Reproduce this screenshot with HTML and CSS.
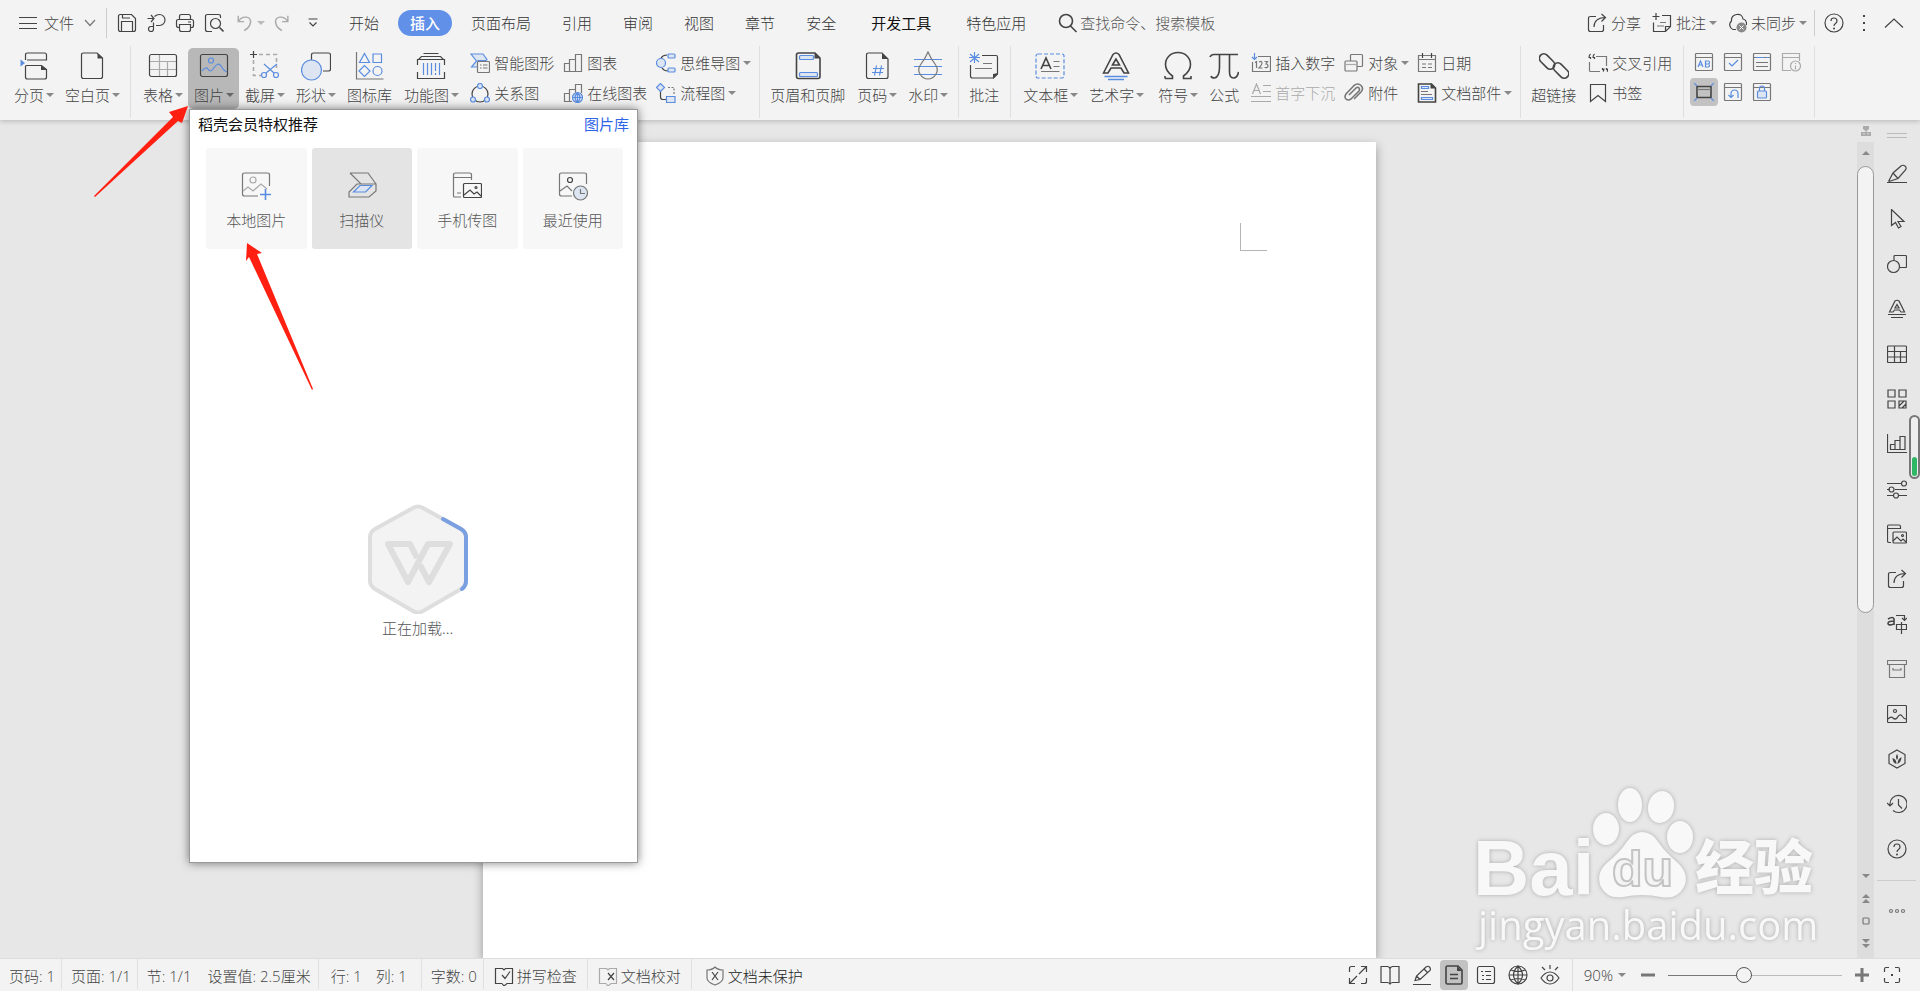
FILE: index.html
```html
<!DOCTYPE html>
<html lang="zh-CN">
<head>
<meta charset="utf-8">
<title>文字文稿</title>
<link rel="stylesheet" href="styles.css">
</head>
<body>
<svg class="sprite" aria-hidden="true">
  <!-- quick access, 20 x 20 -->
  <symbol id="menu" viewBox="0 0 20 20"><path class="k" d="M1 4.500h18M1 10.500h18M1 15.500h18"/></symbol>
  <symbol id="chev" viewBox="0 0 12 8"><path class="g" d="M1 1l5 5.500L11 1"/></symbol>
  <symbol id="save" viewBox="0 0 20 20"><path class="k" d="M1.500 3.500q0-2 2-2h11l4 4v11q0 2-2 2h-13q-2 0-2-2zM5.500 1.500v3.500h7.500M4.500 18v-9.500h11V18"/></symbol>
  <symbol id="export" viewBox="0 0 20 20"><path class="k" d="M1.500 5.500h6M5 2l3 3.500L5 9M8.500 3.500q2-2 5-2a5.500 5.500 0 0 1 0 11H10M7.500 9.500V16a2.500 2.500 0 1 1-2.500-2.500h2.500"/></symbol>
  <symbol id="print" viewBox="0 0 20 20"><path class="k" d="M4.500 6.500v-3q0-2 2-2h7q2 0 2 2v3M4.500 14.500h-1q-2 0-2-2v-4q0-2 2-2h13q2 0 2 2v4q0 2-2 2h-1M4.500 11.500h11v5q0 2-2 2h-7q-2 0-2-2zM13 9h3"/></symbol>
  <symbol id="preview" viewBox="0 0 20 20"><path class="k" d="M16.500 5V3.500q0-2-2-2h-11q-2 0-2 2v13q0 2 2 2H8"/><circle class="k" cx="11.500" cy="10.500" r="5"/><path class="k w2" d="M15.500 14.500l4 4"/></symbol>
  <symbol id="undo" viewBox="0 0 20 20"><path class="l w2" d="M2.500 2v6.500H9M3 8q3-5 8.500-4.500T16 10q-1 5-7 8.500"/></symbol>
  <symbol id="redo" viewBox="0 0 20 20"><path class="l w2" d="M16.500 2v6.500H10M16 8q-3-5-8.500-4.500T3 10q1 5 7 8.500"/></symbol>
  <symbol id="more" viewBox="0 0 10 10"><path class="k" d="M.5 1h9M1.500 4.500L5 8l3.500-3.500"/></symbol>
  <symbol id="search" viewBox="0 0 20 20"><circle class="k w2" cx="8" cy="8" r="6.500"/><path class="k w2" d="M12.500 13l6 6"/></symbol>
  <symbol id="share" viewBox="0 0 20 20"><path class="k" d="M9 3.500H3.500q-2 0-2 2v11q0 2 2 2h11q2 0 2-2V12M7 14q0-9 11-9.500M14.500 1l4 3.500-4 4"/></symbol>
  <symbol id="comment" viewBox="0 0 20 20"><path class="k" d="M4 0v7M.5 3.500h7M10 2.500h8.500v11l-5 5H1.500v-9M13.500 18v-4.500h5"/><path class="g" d="M8 9.500h6M5 13h7"/></symbol>
  <symbol id="cloud" viewBox="0 0 20 20"><path class="k" d="M9 16.500H6a5 5 0 0 1-1.500-8.500Q4 2.500 9.500 1.500T16 6q4 1 3.500 6"/><circle class="fg" cx="14.500" cy="14.500" r="5"/><path stroke="#fff" d="M12.500 12.500l4 4M16.500 12.500l-4 4"/></symbol>
  <symbol id="help" viewBox="0 0 20 20"><circle class="k" cx="10" cy="10" r="9"/><path class="k" d="M7 8q0-3 3-3t3 3q0 1.500-1.500 2.500T10 13"/><circle class="fk" cx="10" cy="15.500" r="1"/></symbol>
  <symbol id="dots" viewBox="0 0 4 20"><path class="fk" d="M1 2h2v2H1zM1 9h2v2H1zM1 16h2v2H1z"/></symbol>
  <symbol id="up" viewBox="0 0 20 12"><path class="k" d="M1 10.500l9-8.500 9 8.500"/></symbol>

  <!-- large ribbon icons, 30 x 30 -->
  <symbol id="i-break" viewBox="0 0 30 30"><path class="k" d="M6.500 9V4q0-2 2-2h17q2 0 2 2v5H8M6.500 27V15.500q0-1 1-1h15l5 4V26q0 2-2 2h-17q-2 0-2-2"/><path class="fk" d="M22 14l6 5h-6z"/><path class="fb" d="M1.500 8.500l4.500 3.500-4.500 3.500z"/></symbol>
  <symbol id="i-blank" viewBox="0 0 30 30"><path class="k" d="M4.500 4q0-2 2-2H20l5.500 5v18.500q0 2-2 2h-17q-2 0-2-2z"/><path class="fk" d="M20.500 2l5.500 5.500h-5.500z"/></symbol>
  <symbol id="i-table" viewBox="0 0 30 30"><path class="l" d="M2 10.500h26M2 18.500h26M11.500 3v23M19.500 10v16"/><rect class="k" x="1.500" y="3.500" width="27" height="22" rx="2"/></symbol>
  <symbol id="i-pic" viewBox="0 0 30 30"><rect class="k" x="1.500" y="3.500" width="27" height="22" rx="2"/><circle class="b" cx="12" cy="9.500" r="2.500"/><path class="b" d="M3 20q4-5 6-2 2 4 5 0 5-8 8-3 3 5 6 6"/></symbol>
  <symbol id="i-snip" viewBox="0 0 30 30"><path class="l w2" stroke-dasharray="4 3" d="M9 3.500h17.500V17M3.500 9v15.500H12"/><path class="k" d="M3.500 0v7M0 3.500h7"/><path class="b" d="M14 13l10 9M27 13l-11 9"/><circle class="b" cx="14" cy="24" r="2.500"/><circle class="b" cx="26" cy="24" r="2.500"/></symbol>
  <symbol id="i-shape" viewBox="0 0 30 30"><path class="k" d="M10.500 9V4q0-2 2-2h15q2 0 2 2v14q0 2-2 2H22"/><circle class="b bf" cx="10.500" cy="19" r="10"/></symbol>
  <symbol id="i-iconlib" viewBox="0 0 30 30"><path class="g" d="M1.500 1v27h27"/><path class="b" d="M4.500 11.500h10l-5-9zM18 3h8.500v8.500H18zM4 20l5.500-5.500L15 20l-5.500 5.500z"/><circle class="b" cx="22.500" cy="20" r="4.500"/></symbol>
  <symbol id="i-func" viewBox="0 0 30 30"><path class="k" d="M7.500 2.500h15M5.500 5.500h19l3 3h-25zM1.500 8v6M28.500 8v6M1.500 21v6.500h27V21"/><path class="b" d="M7.500 12v12M11.500 12v12M15.500 12v12M19.500 12v8M23.500 12v12M19.500 22v2"/></symbol>
  <symbol id="i-header" viewBox="0 0 30 30"><path class="k w2 wf" d="M3.500 4q0-2 2-2H22l5 5v18.500q0 2-2 2H5.500q-2 0-2-2z"/><path class="fk" d="M21.500 2L27 7.500h-5.500z"/><rect class="b bf" x="6.500" y="4.500" width="14" height="4" rx="1"/><rect class="b bf" x="6.500" y="21.500" width="18" height="4" rx="1"/></symbol>
  <symbol id="i-pageno" viewBox="0 0 30 30"><path class="k" d="M4.500 4q0-2 2-2H20l6 6v17.500q0 2-2 2H6.500q-2 0-2-2z"/><path class="fk" d="M20 2l6 6h-6z"/><path class="b" d="M14.500 14.500l-2 10M19.500 14.500l-2 10M11 17.500h11M10 21.500h11"/></symbol>
  <symbol id="i-water" viewBox="0 0 30 30"><path class="b" d="M1 8.500h28M1 15.500h28M1 23.500h28"/><path class="g" d="M15 1q3 7 7 12t1 10q-3 5-8 5t-8-5q-3-5 1-10t7-12z"/></symbol>
  <symbol id="i-note" viewBox="0 0 30 30"><path class="k" d="M13 4.500h14q1.500 0 1.500 1.500v17l-4 4H3.500q-2 0-2-2V14"/><path class="fk" d="M29 22v1l-5 5v-5z"/><path class="b" d="M5.500 1v11M1 3l9 8M10 3l-9 8M0 6.500h11"/><path class="g" d="M14 12.500h9M6 17.500h17"/></symbol>
  <symbol id="i-textbox" viewBox="0 0 30 30"><rect class="b" stroke-dasharray="4 2" x="1" y="3" width="28" height="24" rx="2"/><path class="k w2" d="M6 18l5-11 5 11M8 14.500h6"/><path class="g" d="M18.500 10.500h6M18.500 15.500h6M6 20.500h18.500"/></symbol>
  <symbol id="i-art" viewBox="0 0 30 30"><path class="k w2" d="M2.500 22L12 3.500q3-3 6 0L27.500 22H23l-3-5H10l-3 5zM15 8l-3.500 6h7z"/><path class="b w2" d="M3.500 25.500h23M7 28.500h16"/></symbol>
  <symbol id="i-omega" viewBox="0 0 30 30"><path class="k w2" d="M2 27.500h7.500V25q-7-5-7-11.500 0-5 3.500-8.500t9-3.500 9 3.500 3.500 8.500q0 6.500-7 11.500v2.500H28V25M2 25v2.500"/></symbol>
  <symbol id="i-pi" viewBox="0 0 30 30"><path class="k w2" d="M1 6q1-2.500 4-2.500h24M10.500 4v12q0 10-5 11-3 0-3.500-2M20.500 4v17q0 6 4 6 4 0 5-6"/></symbol>
  <symbol id="i-link" viewBox="0 0 30 30"><g class="k w2"><rect x="-1" y="6" width="18" height="9" rx="4.500" transform="rotate(45 8 10.500)"/><rect x="13" y="15" width="18" height="9" rx="4.500" transform="rotate(45 22 19.500)"/></g></symbol>

  <!-- small ribbon icons, 20 x 20 -->
  <symbol id="s-smart" viewBox="0 0 20 20"><path class="b bf" d="M1 1h12l4 5.500-1 1H8V14H1.500l5-6z"/><rect class="g wf" x="7.500" y="8.500" width="12" height="11" rx="1"/><path class="g" d="M10 12h1.500M13 12h4.500M10 15h1.500M13 15h4.500"/></symbol>
  <symbol id="s-rel" viewBox="0 0 20 20"><circle class="k" cx="10" cy="11" r="8"/><circle class="b bf" cx="10" cy="3" r="2.500"/><circle class="b bf" cx="3" cy="16.500" r="2.500"/><circle class="b bf" cx="17" cy="16.500" r="2.500"/></symbol>
  <symbol id="s-chart" viewBox="0 0 20 20"><path class="g" d="M1.500 10.500h5v8h-5zM6.500 6.500h6v12h-6zM12.500 1.500h6v17h-6z"/></symbol>
  <symbol id="s-online" viewBox="0 0 20 20"><path class="g" d="M9 18.500H1.500v-8h5v8M6.500 10V6.500h6V10M12.500 8V1.500h6V10"/><circle class="b bf" cx="14.500" cy="14.500" r="5"/><path class="b" d="M9.500 14.500h10M14.500 9.500v10M14.500 9.500q-5 5 0 10 5-5 0-10"/></symbol>
  <symbol id="s-mind" viewBox="0 0 20 20"><path class="k" d="M5 5q2-3 6-3M6 15q2 3 6 3"/><circle class="b bf" cx="5" cy="10" r="4.500"/><rect class="b bf" x="12" y="1" width="7" height="4" rx="1"/><rect class="b bf" x="12" y="15" width="7" height="4" rx="1"/></symbol>
  <symbol id="s-flow" viewBox="0 0 20 20"><path class="k" d="M4.500 8v6q0 2.500 2.500 2.500h3"/><path class="g" stroke-dasharray="2 1.500" d="M12 4.500h6V12"/><path class="b bf" d="M.5 4.500l4-4 4 4-4 4zM10.500 13.500h8.500v6h-8.500z"/></symbol>
  <symbol id="s-num" viewBox="0 0 20 20"><path class="g" d="M7 3.500h12.500v15h-18V9"/><path class="b" d="M3.500 0v6M1 4l2.500 2.500L6 4"/><path class="g" d="M4 9.500l1.500-1V15M8 9q3-1.500 3 1 0 2-3 5h3.500M13.500 8.500h3l-1.500 2.500q2 0 2 2t-3.500 1.500"/></symbol>
  <symbol id="s-drop" viewBox="0 0 20 20"><path class="l" d="M1.500 11L5.500 1l4 10M3 7.500h5M12 2.500h8M12 8.500h8M0 13.500h20M0 18.500h20"/></symbol>
  <symbol id="s-obj" viewBox="0 0 20 20"><path class="g" d="M6.500 8V2.500q0-1 1-1h10q1 0 1 1v10q0 1-1 1H13"/><rect class="g" x="1" y="8" width="12" height="10" rx="1"/><path class="l" d="M1 11.500h12"/></symbol>
  <symbol id="s-clip" viewBox="0 0 20 20"><path class="g w2" d="M5 12l7-7q2-1.500 3 0t0 3l-8 8q-3 2-5 0t0-5l8-8.500q4-3 7 0t0 6.500l-7 7"/></symbol>
  <symbol id="s-date" viewBox="0 0 20 20"><path class="g" d="M1.500 2.500h17v16h-17zM1 6.500h18"/><path class="k" d="M5.500 0v5M14.500 0v5"/><path class="g" d="M5 11h4M11 11h4M5 14.500h4M11 14.500h4"/></symbol>
  <symbol id="s-parts" viewBox="0 0 20 20"><path class="k w2" d="M1.500 1h13l4 4v14h-17z"/><path class="fk" d="M13.500 0L19 5.500h-5.500z"/><path class="b bf" d="M4.500 3.500h7v2h-7zM4.500 14.500h11v2h-11z"/><path class="g" d="M4 8.500h7M4 11.500h11"/></symbol>
  <symbol id="s-cross" viewBox="0 0 20 20"><path class="g" d="M8 3.500h10.500V13M1.500 9v8.500q0 1 1 1H12"/><path class="k" d="M1 4.500h1.500V6M1 5q0-3 1.500-4M5 4.500h1.500V6M5 5q0-3 1.500-4M14.500 15v1.500H16M16 15.500q0 2-1 3M18.500 15v1.500H20M20 15.500q0 2-1 3"/></symbol>
  <symbol id="s-mark" viewBox="0 0 20 20"><path class="k" d="M2.500 1.500h15v17L10 12.500l-7.500 6z"/></symbol>
  <symbol id="c-frame" viewBox="0 0 20 20"><path class="g" d="M1.500 5.500h17M2.500 1.500h15q1 0 1 1v15q0 1-1 1h-15q-1 0-1-1v-15q0-1 1-1z"/></symbol>
  <symbol id="c-ab" viewBox="0 0 20 20"><use href="#c-frame"/><path class="b" d="M4 15l2.500-6L9 15M5 13h3M11.500 9v6h2.500q1.500 0 1.500-1.500T14 12h-2.500H14q1.500 0 1.500-1.500T14 9z"/></symbol>
  <symbol id="c-check" viewBox="0 0 20 20"><use href="#c-frame"/><path class="b" d="M6 11l3 3 6-6"/></symbol>
  <symbol id="c-list" viewBox="0 0 20 20"><use href="#c-frame"/><path class="b" d="M4 5.500h8M14 5.500h3"/><path class="g" d="M4 10.500h12M4 14.500h12"/></symbol>
  <symbol id="c-info" viewBox="0 0 20 20"><path class="l" d="M10 18.500H1.500v-17h17V9M1.500 5.500h17"/><circle class="l wf" cx="14.500" cy="14" r="5"/><path class="l" d="M14.500 11v1M14.500 13.500v4"/></symbol>
  <symbol id="c-fit" viewBox="0 0 20 20"><path class="k w2" d="M3 4.500h14v11H3z"/><path class="g" d="M3 7.500h14"/><path class="b" d="M0 1l3 3M20 1l-3 3M0 19l3-3M20 19l-3-3"/></symbol>
  <symbol id="c-back" viewBox="0 0 20 20"><use href="#c-frame"/><path class="b" d="M15 16v-4q0-4-3.500-4T8 12v4M5.500 13L8 15.500l2.500-2.500"/></symbol>
  <symbol id="c-lock" viewBox="0 0 20 20"><use href="#c-frame"/><path class="b" d="M7.500 9V6.500q0-2.500 2.500-2.500t2.500 2.500V9"/><rect class="b bf" x="5.500" y="9" width="9" height="7" rx="1"/></symbol>

  <!-- picture panel tiles, 30 x 30 -->
  <symbol id="t-local" viewBox="0 0 30 30"><path class="g" d="M28.500 15V4q0-2-2-2h-23q-2 0-2 2v19q0 2 2 2H17"/><circle class="l" cx="12" cy="9" r="3"/><path class="l" d="M2 20l5-4 5 4 8-7 6 5"/><path class="b w2" d="M24.500 18v11M19 23.500h11"/></symbol>
  <symbol id="t-scan" viewBox="0 0 30 30"><path class="g" d="M3 2h18l8 11M3 2l11 11h15v7l-7 6H2v-5l8-8h4"/><path class="b bf" d="M6.500 21h12l6.500-6.500H13z"/></symbol>
  <symbol id="t-phone" viewBox="0 0 30 30"><path class="g" d="M19.500 9V4q0-2-2-2h-14q-2 0-2 2v21q0 1 1 1H9M1.500 6.500h18M5 22h4"/><rect class="k" x="11.500" y="12.500" width="18" height="14" rx="1"/><path class="k" d="M12 24l6-5 4 4 3-2 4 4"/><circle class="k" cx="24" cy="16.500" r="1"/></symbol>
  <symbol id="t-recent" viewBox="0 0 30 30"><path class="g" d="M28.500 13V4q0-2-2-2h-23q-2 0-2 2v19q0 2 2 2H14M2 20l7-5 5 5"/><circle class="k" cx="12" cy="9" r="2.500"/><circle class="g bf" cx="22.500" cy="22" r="7"/><path class="g" d="M22.500 18v4.500H27"/></symbol>

  <!-- side bar, 20 x 20 -->
  <symbol id="b-pen" viewBox="0 0 20 20"><path class="k" d="M0 18.500h20M1.500 17.500L6 9l8-7q2-1.500 4 0t.5 4L11 14.500l-9 3M6 9l5 5.500"/></symbol>
  <symbol id="b-ptr" viewBox="0 0 20 20"><path class="k" d="M4.500 .5v16l4-3 3 5.500 2.500-1.500-3-5h6z"/></symbol>
  <symbol id="b-shape" viewBox="0 0 20 20"><path class="k" d="M7 6V2.500q0-1 1-1h10.500q1 0 1 1v10q0 1-1 1H13"/><circle class="k" cx="6.500" cy="12.500" r="6"/></symbol>
  <symbol id="b-art" viewBox="0 0 20 20"><path class="k" d="M2.500 13L8 2q2-1.500 4 0l5.500 11H14l-1.500-2h-5L6 13zM10 5.500L8 9h4z"/><path class="k" d="M1 15.500h18M4 18.500h12"/></symbol>
  <symbol id="b-table" viewBox="0 0 20 20"><path class="k" d="M.5 3q0-1 1-1h17q1 0 1 1v14.500q0 1-1 1h-17q-1 0-1-1zM.5 7.500h19M.5 13h19M7.500 2v16.500M13.500 7.500v11"/></symbol>
  <symbol id="b-grid" viewBox="0 0 20 20"><path class="k" d="M1 1h7v7H1zM12 1h7v7h-7zM1 12h7v7H1zM12 12h7v7h-7zM12 17l5-5M15 19l4-4"/></symbol>
  <symbol id="b-chart" viewBox="0 0 20 20"><path class="k" d="M.5 0v18.500H20M3.500 10.500h4.500v5H3.500zM8 6.500h5v9H8zM13 2.500h5v13h-5z"/></symbol>
  <symbol id="b-set" viewBox="0 0 20 20"><path class="k" d="M0 4.500h14M0 10.500h3M8 10.500h12M0 16.500h6M11 16.500h9"/><circle class="k" cx="17" cy="4.500" r="2.500"/><circle class="k" cx="4.500" cy="10.500" r="2.500"/><circle class="k" cx="9" cy="16.500" r="2.500"/></symbol>
  <symbol id="b-gal" viewBox="0 0 20 20"><path class="k" d="M13.500 5V2.500q0-1.500-1.500-1.500H2Q.5 1 .5 2.500V17q0 1.500 1.500 1.500h2M.5 4.500h13"/><rect class="k" x="6" y="8" width="13.500" height="11" rx="1"/><path class="k" d="M6 17l4-4 4 4 2-2 3 3"/><circle class="k" cx="15.500" cy="11.500" r="1"/></symbol>
  <symbol id="b-tran" viewBox="0 0 20 20"><path class="k w2" d="M1 5q5-3 6 0v6M7 7Q1 7 1 9.500T7 10"/><path class="k" d="M9 1.500h8.500V6M15 4l2.500 2.500L20 4M9.500 10.500h10v5h-10zM14.500 8v12"/></symbol>
  <symbol id="b-box" viewBox="0 0 20 20"><path class="g" d="M.5 1.500h19v4H.5zM2.500 5.500v13h15v-13M6 9v2h8V9"/></symbol>
  <symbol id="b-pic" viewBox="0 0 20 20"><rect class="k" x=".5" y="1.500" width="19" height="17" rx="1"/><circle class="k" cx="8" cy="7" r="1.500"/><path class="k" d="M1 15q3-3 5-1 2 2 4 0 3-5 5-2 2 3 4 3"/></symbol>
  <symbol id="b-hex" viewBox="0 0 20 20"><path class="k" d="M10 1l8 4.500v9L10 19l-8-4.500v-9z"/><path class="fk" d="M10 5q2 3 0 6-2-3 0-6zM14.500 8q0 5-4 7 0-5 4-7zM5.500 9q4 1 4 6-4-1-4-6z"/></symbol>
  <symbol id="b-hist" viewBox="0 0 20 20"><path class="k" d="M3 11a8.500 8.500 0 1 1 3 5.500M0 9l3 3 3-3M11.500 5v6l3.500 3.500"/></symbol>
  <symbol id="b-more" viewBox="0 0 20 20"><circle class="g" cx="4" cy="10" r="1.500"/><circle class="g" cx="10" cy="10" r="1.500"/><circle class="g" cx="16" cy="10" r="1.500"/></symbol>
  <symbol id="tri-up" viewBox="0 0 8 6"><path class="fg" d="M0 5l4-4 4 4z"/></symbol>
  <symbol id="tri-dn" viewBox="0 0 8 6"><path class="fg" d="M0 1l4 4 4-4z"/></symbol>
  <symbol id="split" viewBox="0 0 12 12"><path class="fl" d="M3 1h6v3L6.500 6v1H11v4H1V7h4.500V6L3 4zM3.500 8v1.500h1V8zM7.500 8v1.500h1V8z"/></symbol>
  <symbol id="dbl-up" viewBox="0 0 8 10"><path class="fg" d="M0 5l4-4 4 4zM0 10l4-4 4 4z"/></symbol>
  <symbol id="dbl-dn" viewBox="0 0 8 10"><path class="fg" d="M0 0l4 4 4-4zM0 5l4 4 4-4z"/></symbol>
  <symbol id="sq" viewBox="0 0 8 8"><rect class="g" x="1" y="1" width="6" height="6" rx="1"/></symbol>

  <!-- status bar, 20 x 20 -->
  <symbol id="p-spell" viewBox="0 0 20 20"><path class="k" d="M8 17.500H1.500v-15h7L10 4l1.500-1.500h7v15H13L10 20l-2-2.500M8 9l3 3.500 5-7"/></symbol>
  <symbol id="p-proof" viewBox="0 0 20 20"><path class="l" d="M8 17.500H1.500v-15h7L10 4l1.500-1.500h7v15H13L10 20l-2-2.500"/><path class="k" d="M10 7l6 7M16 7l-6 7"/></symbol>
  <symbol id="p-shield" viewBox="0 0 20 20"><path class="g" d="M10 1q3 3 8 3v8q0 4-8 7-8-3-8-7V4q5 0 8-3z"/><path class="k" d="M7 6l6 8M13 6l-6 8"/></symbol>
  <symbol id="v-full" viewBox="0 0 20 20"><path class="k" d="M1.500 7V3.500q0-2 2-2H7M11 9l7.500-7.500M13 1.500h5.500V7M18.500 13v3.500q0 2-2 2H13M9 11l-7.500 7.500M1.500 13v5.500H7"/></symbol>
  <symbol id="v-read" viewBox="0 0 20 20"><path class="k" d="M1 1.500h6.500Q10 2 10 4q0-2 2.500-2.500H19v16h-6.500Q10 18 10 19.500 10 18 7.500 17.500H1zM10 4v15"/></symbol>
  <symbol id="v-edit" viewBox="0 0 20 20"><path class="k" d="M1 19.500h18M3 15.500L4.500 11 14 2q2-1.500 3.500 0T18 5.500L8 14.500zM4.500 11L8 14.500M12 4l4 4"/></symbol>
  <symbol id="v-page" viewBox="0 0 20 20"><path class="k w2" d="M2 2.500Q2 1 3.500 1H14l4 4v12.500q0 1.500-1.500 1.500h-13Q2 19 2 17.500zM6 9.500h8M6 13.500h8"/><path class="fk" d="M13 1l5 5h-5z"/></symbol>
  <symbol id="v-list" viewBox="0 0 20 20"><rect class="k" x="1.500" y="1.500" width="17" height="17" rx="2"/><path class="k" d="M5 6.500h2M9 6.500h6M6 10.500h2M10 10.500h5M6 14.500h2M10 14.500h5"/></symbol>
  <symbol id="v-web" viewBox="0 0 20 20"><circle class="k" cx="10" cy="10" r="9"/><path class="k" d="M10 1v18M1 10h18M10 1q-9 9 0 18 9-9 0-18M3 5q7 3 14 0M3 15q7-3 14 0"/></symbol>
  <symbol id="v-eye" viewBox="0 0 20 20"><path class="k" d="M1 13q4-6 9-6t9 6q-4 6-9 6t-9-6zM10 0v4M2 2l3 3M18 2l-3 3"/><circle class="k" cx="10" cy="13" r="3"/></symbol>
  <symbol id="v-fit" viewBox="0 0 20 20"><path class="k" d="M2.500 7V4q0-1.500 1.500-1.500h3M13 2.500h3q1.500 0 1.500 1.500v3M17.500 13v3q0 1.500-1.500 1.500h-3M7 17.500H4q-1.500 0-1.500-1.500v-3"/><path class="fk" d="M9 9h2v2H9z"/></symbol>
  <symbol id="minus" viewBox="0 0 16 16"><path class="g w3" d="M1 8h14"/></symbol>
  <symbol id="plus" viewBox="0 0 16 16"><path class="g w3" d="M1 8h14M8 1v14"/></symbol>
</svg>

<header class="header">
  <nav class="topbar">
    <button class="tool file"><svg class="ic20"><use href="#menu"/></svg>文件<svg class="chev"><use href="#chev"/></svg></button>
    <span class="vline"></span>
    <div class="quick">
      <button class="tool" aria-label="保存"><svg class="ic20"><use href="#save"/></svg></button>
      <button class="tool" aria-label="输出"><svg class="ic20"><use href="#export"/></svg></button>
      <button class="tool" aria-label="打印"><svg class="ic20"><use href="#print"/></svg></button>
      <button class="tool" aria-label="打印预览"><svg class="ic20"><use href="#preview"/></svg></button>
      <button class="tool faded" aria-label="撤销"><svg class="ic18"><use href="#undo"/></svg><i class="caret"></i></button>
      <button class="tool" aria-label="恢复"><svg class="ic18"><use href="#redo"/></svg></button>
      <button class="tool last" aria-label="更多"><svg class="ic10"><use href="#more"/></svg></button>
    </div>
    <div class="tabs">
      <button class="tab">开始</button>
      <button class="tab active">插入</button>
      <button class="tab">页面布局</button>
      <button class="tab">引用</button>
      <button class="tab">审阅</button>
      <button class="tab">视图</button>
      <button class="tab">章节</button>
      <button class="tab">安全</button>
      <button class="tab dev">开发工具</button>
      <button class="tab">特色应用</button>
    </div>
    <label class="search"><svg class="ic20"><use href="#search"/></svg><input type="text" placeholder="查找命令、搜索模板" aria-label="查找命令、搜索模板"></label>
    <div class="account">
      <button class="tool"><svg class="ic20"><use href="#share"/></svg>分享</button>
      <button class="tool"><svg class="ic20"><use href="#comment"/></svg>批注<i class="caret"></i></button>
      <button class="tool"><svg class="ic20"><use href="#cloud"/></svg>未同步<i class="caret"></i></button>
      <span class="vline short"></span>
      <button class="tool" aria-label="帮助"><svg class="ic20"><use href="#help"/></svg></button>
      <button class="tool narrow" aria-label="选项"><svg class="dots"><use href="#dots"/></svg></button>
      <button class="tool" aria-label="收起功能区"><svg class="upic"><use href="#up"/></svg></button>
    </div>
  </nav>

  <div class="ribbon">
    <section class="group first">
      <button class="big"><svg><use href="#i-break"/></svg><span>分页<i class="caret"></i></span></button>
      <button class="big"><svg><use href="#i-blank"/></svg><span>空白页<i class="caret"></i></span></button>
    </section>
    <section class="group wide">
      <button class="big"><svg><use href="#i-table"/></svg><span>表格<i class="caret"></i></span></button>
      <div class="picture-menu">
        <button class="big pressed"><svg><use href="#i-pic"/></svg><span>图片<i class="caret"></i></span></button>
        <div class="panel">
          <div class="panel-head"><span>稻壳会员特权推荐</span><a href="#">图片库</a></div>
          <div class="tiles">
            <button class="tile"><svg><use href="#t-local"/></svg>本地图片</button>
            <button class="tile hover"><svg><use href="#t-scan"/></svg>扫描仪</button>
            <button class="tile"><svg><use href="#t-phone"/></svg>手机传图</button>
            <button class="tile"><svg><use href="#t-recent"/></svg>最近使用</button>
          </div>
          <div class="loading">
            <svg class="loader" viewBox="0 0 100 110">
              <path fill="#f3f3f3" stroke="#dedede" stroke-width="4" stroke-linejoin="round" d="M45 4q5-3 10 0l38 21q5 3 5 8v44q0 5-5 8L55 107q-5 3-10 0L7 85q-5-3-5-8V33q0-5 5-8z"/>
              <path fill="none" stroke="#7ba0e2" stroke-width="4" stroke-linecap="round" d="M75 15l18 10q5 3 5 8v44q0 5-4 8"/>
              <path fill="none" stroke="#dedede" stroke-width="6" stroke-linejoin="round" d="M49 54l-7-14H20l20 38 20-38h22L61 78 52 61"/>
            </svg>
            <span>正在加载...</span>
          </div>
        </div>
      </div>
      <button class="big"><svg><use href="#i-snip"/></svg><span>截屏<i class="caret"></i></span></button>
      <button class="big"><svg><use href="#i-shape"/></svg><span>形状<i class="caret"></i></span></button>
      <button class="big"><svg><use href="#i-iconlib"/></svg><span>图标库</span></button>
      <button class="big"><svg><use href="#i-func"/></svg><span>功能图<i class="caret"></i></span></button>
      <div class="cols">
        <div class="col">
          <button class="tool"><svg class="ic20"><use href="#s-smart"/></svg>智能图形</button>
          <button class="tool"><svg class="ic20"><use href="#s-rel"/></svg>关系图</button>
        </div>
        <div class="col">
          <button class="tool"><svg class="ic20"><use href="#s-chart"/></svg>图表</button>
          <button class="tool"><svg class="ic20"><use href="#s-online"/></svg>在线图表</button>
        </div>
        <div class="col">
          <button class="tool"><svg class="ic20"><use href="#s-mind"/></svg>思维导图<i class="caret"></i></button>
          <button class="tool"><svg class="ic20"><use href="#s-flow"/></svg>流程图<i class="caret"></i></button>
        </div>
      </div>
    </section>
    <section class="group">
      <button class="big"><svg><use href="#i-header"/></svg><span>页眉和页脚</span></button>
      <button class="big"><svg><use href="#i-pageno"/></svg><span>页码<i class="caret"></i></span></button>
      <button class="big"><svg><use href="#i-water"/></svg><span>水印<i class="caret"></i></span></button>
    </section>
    <section class="group">
      <button class="big"><svg><use href="#i-note"/></svg><span>批注</span></button>
    </section>
    <section class="group wide">
      <button class="big"><svg><use href="#i-textbox"/></svg><span>文本框<i class="caret"></i></span></button>
      <button class="big"><svg><use href="#i-art"/></svg><span>艺术字<i class="caret"></i></span></button>
      <button class="big symbol"><svg><use href="#i-omega"/></svg><span>符号<i class="caret"></i></span></button>
      <button class="big"><svg><use href="#i-pi"/></svg><span>公式</span></button>
      <div class="cols">
        <div class="col">
          <button class="tool"><svg class="ic20"><use href="#s-num"/></svg>插入数字</button>
          <button class="tool off" disabled><svg class="ic20"><use href="#s-drop"/></svg>首字下沉</button>
        </div>
        <div class="col">
          <button class="tool"><svg class="ic20"><use href="#s-obj"/></svg>对象<i class="caret"></i></button>
          <button class="tool"><svg class="ic20"><use href="#s-clip"/></svg>附件</button>
        </div>
        <div class="col">
          <button class="tool"><svg class="ic20"><use href="#s-date"/></svg>日期</button>
          <button class="tool"><svg class="ic20"><use href="#s-parts"/></svg>文档部件<i class="caret"></i></button>
        </div>
      </div>
    </section>
    <section class="group">
      <button class="big"><svg><use href="#i-link"/></svg><span>超链接</span></button>
      <div class="cols">
        <div class="col">
          <button class="tool"><svg class="ic20"><use href="#s-cross"/></svg>交叉引用</button>
          <button class="tool"><svg class="ic20"><use href="#s-mark"/></svg>书签</button>
        </div>
      </div>
    </section>
    <section class="group controls">
      <div class="ctl-grid">
        <button class="ctl" aria-label="文字型窗体域"><svg><use href="#c-ab"/></svg></button>
        <button class="ctl" aria-label="复选框窗体域"><svg><use href="#c-check"/></svg></button>
        <button class="ctl" aria-label="下拉型窗体域"><svg><use href="#c-list"/></svg></button>
        <button class="ctl" aria-label="窗体域选项"><svg><use href="#c-info"/></svg></button>
        <button class="ctl on" aria-label="窗体域底纹"><svg><use href="#c-fit"/></svg></button>
        <button class="ctl" aria-label="重设窗体域"><svg><use href="#c-back"/></svg></button>
        <button class="ctl" aria-label="保护窗体"><svg><use href="#c-lock"/></svg></button>
      </div>
    </section>
  </div>
</header>

<main class="workspace">
  <div class="canvas">
    <article class="page"><span class="crop"></span></article>
    <svg class="watermark" viewBox="0 0 360 180">
      <g class="mark">
        <text class="wm-logo" x="-2" y="117">Bai</text>
        <ellipse cx="131" cy="51" rx="13" ry="16"/>
        <ellipse cx="155" cy="27" rx="12" ry="17"/>
        <ellipse cx="186" cy="29" rx="13" ry="16" transform="rotate(12 186 29)"/>
        <ellipse cx="205" cy="59" rx="13" ry="16"/>
        <path d="M167 54q10 0 17 11 6 9 18 19 13 12 7 25-7 13-23 10-19-4-38 0-16 2-22-10-6-14 7-25 12-10 18-19 7-11 16-11z"/>
        <text class="wm-cn" x="220" y="111">经验</text>
        <text class="wm-url" x="3" y="162">jingyan.baidu.com</text>
      </g>
      <text class="wm-du" x="137" y="108">du</text>
    </svg>
  </div>
  <div class="scroll">
    <svg class="split"><use href="#split"/></svg>
    <div class="track">
      <svg class="tri"><use href="#tri-up"/></svg>
      <div class="thumb"></div>
      <div class="jump">
        <svg class="tri"><use href="#tri-dn"/></svg>
        <svg class="dbl"><use href="#dbl-up"/></svg>
        <svg class="sq"><use href="#sq"/></svg>
        <svg class="dbl"><use href="#dbl-dn"/></svg>
      </div>
    </div>
  </div>
  <aside class="side">
    <span class="grip"></span>
    <button aria-label="书写"><svg><use href="#b-pen"/></svg></button>
    <button aria-label="选择"><svg><use href="#b-ptr"/></svg></button>
    <button aria-label="形状"><svg><use href="#b-shape"/></svg></button>
    <button aria-label="样式"><svg><use href="#b-art"/></svg></button>
    <button aria-label="表格"><svg><use href="#b-table"/></svg></button>
    <button aria-label="图标"><svg><use href="#b-grid"/></svg></button>
    <button aria-label="图表"><svg><use href="#b-chart"/></svg></button>
    <button aria-label="属性"><svg><use href="#b-set"/></svg></button>
    <button aria-label="图库"><svg><use href="#b-gal"/></svg></button>
    <button aria-label="分享"><svg><use href="#share"/></svg></button>
    <button aria-label="翻译"><svg><use href="#b-tran"/></svg></button>
    <button aria-label="归档"><svg><use href="#b-box"/></svg></button>
    <button aria-label="图片"><svg><use href="#b-pic"/></svg></button>
    <button aria-label="稻壳"><svg><use href="#b-hex"/></svg></button>
    <button aria-label="历史"><svg><use href="#b-hist"/></svg></button>
    <button aria-label="帮助"><svg><use href="#help"/></svg></button>
    <hr>
    <button aria-label="更多"><svg><use href="#b-more"/></svg></button>
    <span class="meter"><i></i></span>
  </aside>
</main>

<footer class="status">
  <span class="cell">页码: 1</span>
  <span class="cell">页面: 1/1</span>
  <span class="cell pair"><span>节: 1/1</span><span>设置值: 2.5厘米</span></span>
  <span class="cell pair roomy"><span>行: 1</span><span>列: 1</span></span>
  <span class="cell">字数: 0</span>
  <button class="cell"><svg class="ic20"><use href="#p-spell"/></svg>拼写检查</button>
  <button class="cell"><svg class="ic20"><use href="#p-proof"/></svg>文档校对</button>
  <button class="cell strong"><svg class="ic20"><use href="#p-shield"/></svg>文档未保护</button>
  <div class="views">
    <button aria-label="全屏"><svg><use href="#v-full"/></svg></button>
    <button aria-label="阅读"><svg><use href="#v-read"/></svg></button>
    <button aria-label="写作"><svg><use href="#v-edit"/></svg></button>
    <button class="on" aria-label="页面视图"><svg><use href="#v-page"/></svg></button>
    <button aria-label="大纲"><svg><use href="#v-list"/></svg></button>
    <button aria-label="网页"><svg><use href="#v-web"/></svg></button>
    <button aria-label="护眼"><svg><use href="#v-eye"/></svg></button>
  </div>
  <div class="zoom">
    <button class="pct">90%<i class="caret"></i></button>
    <button aria-label="缩小"><svg class="ic16"><use href="#minus"/></svg></button>
    <input type="range" min="0" max="100" value="43" aria-label="缩放">
    <button aria-label="放大"><svg class="ic16"><use href="#plus"/></svg></button>
    <button class="fit" aria-label="适合窗口"><svg class="ic20"><use href="#v-fit"/></svg></button>
  </div>
</footer>

<svg class="arrows" viewBox="0 0 330 400" aria-hidden="true">
  <path d="M188 106l-19 6 4 5-79 79 1 1 83-76 4 2z"/>
  <path d="M247 243l-1 18 3-4 63 133 1-1-56-135 5-1z"/>
</svg>
</body>
</html>
```
FILE: styles.css
```css
* { box-sizing: border-box; }

body {
  margin: 0;
  height: 100vh;
  display: flex;
  flex-direction: column;
  overflow: hidden;
  background: #e7e7e7;
  color: #444;
  font-family: "Noto Sans CJK SC", "Noto Sans", sans-serif;
  font-size: 15px;
  font-weight: 300;
  line-height: 20px;
}

button, input {
  margin: 0;
  padding: 0;
  border: 0;
  background: none;
  color: inherit;
  font: inherit;
}

button { white-space: nowrap; }
svg { display: block; flex: none; }
.sprite { position: absolute; width: 0; height: 0; }

/* icon strokes and fills */
.k, .g, .l, .b { fill: none; stroke-width: 1.2; }
.k { stroke: #444; }
.g { stroke: #777; }
.l { stroke: #aaa; }
.b { stroke: #5a8de0; }
.w2 { stroke-width: 1.6; }
.w3 { stroke-width: 3; }
.fk { fill: #444; }
.fg { fill: #888; }
.fl { fill: #aaa; fill-rule: evenodd; }
.fb { fill: #5a8de0; }
.bf { fill: #dde5f2; }
.wf { fill: #f3f3f3; }

.ic20 { width: 20px; height: 20px; }
.ic18 { width: 18px; height: 18px; }
.ic16 { width: 16px; height: 16px; }
.ic10 { width: 10px; height: 10px; }

.caret {
  display: inline-block;
  flex: none;
  margin: 0 -1px;
  border: 4px solid transparent;
  border-top-color: #888;
  border-bottom: 0;
}

.header {
  position: relative;
  z-index: 2;
  flex: none;
  background: #f3f3f3;
  box-shadow: 0 1px 5px rgba(0, 0, 0, .22);
}

.topbar {
  display: flex;
  align-items: center;
  height: 46px;
  padding-left: 18px;
}

.tool {
  display: flex;
  align-items: center;
  gap: 4px;
}

.file { margin-right: 10px; gap: 6px; }
.chev { width: 12px; height: 8px; margin-left: 4px; }
.vline { width: 1px; height: 30px; background: #ccc; }
.vline.short { height: 26px; }

.quick {
  display: flex;
  align-items: center;
  gap: 9px;
  padding-left: 10px;
}
.quick .faded { margin-left: 3px; }
.quick .faded .caret { border-top-color: #bbb; }
.quick .last { margin: 0 0 0 8px; }

.tabs {
  display: flex;
  align-items: center;
  gap: 31px;
  margin-left: 31px;
  color: #333;
}
.tab { height: 26px; line-height: 26px; }
.tab.active {
  margin: 0 -12px;
  padding: 0 12px;
  border-radius: 13px;
  background: #6190e8;
  color: #fff;
  font-weight: 500;
}
.tab.dev { margin: 0 4px; color: #111; font-weight: 400; }

.search {
  display: flex;
  align-items: center;
  flex: 1;
  gap: 2px;
  margin-left: 32px;
}
.search input { width: 180px; }
.search input::placeholder { color: #555; opacity: 1; }

.account {
  display: flex;
  align-items: center;
  gap: 11px;
  padding-right: 16px;
}
.account .vline { margin: 0 -2px 0 -3px; }
.account .narrow { margin: 0 7px; }
.dots { width: 4px; height: 20px; }
.upic { width: 20px; height: 12px; }

.ribbon {
  display: flex;
  height: 74px;
}

.group {
  display: flex;
  align-items: flex-start;
  gap: 12px;
  height: 72px;
  padding: 0 11px 0 10px;
  border-right: 1px solid #dfdfdf;
}
.group.first { padding: 0 11px 0 14px; }
.group.wide { padding: 0 9px 0 12px; }
.group.controls { padding: 0 9px 0 6px; }

.big {
  display: flex;
  flex-direction: column;
  align-items: center;
  gap: 4px;
  padding-top: 5px;
}
.big svg { width: 30px; height: 30px; }
.big span { display: flex; align-items: center; gap: 3px; }
.big.symbol { margin-left: 3px; }

.picture-menu { position: relative; }
.pressed {
  margin: 2px -6px 0;
  padding: 3px 6px 4px;
  border-radius: 5px;
  background: #b8b8b8;
}
.pressed .caret { border-top-color: #666; }

.cols { display: flex; gap: 9px; }
.col {
  display: flex;
  flex-direction: column;
  gap: 10px;
  padding-top: 7px;
}
.off { color: #aaa; }

.ctl-grid {
  display: grid;
  grid-template-columns: repeat(4, 28px);
  gap: 2px 1px;
  padding-top: 2px;
}
.ctl {
  display: grid;
  place-items: center;
  height: 28px;
  border-radius: 4px;
}
.ctl svg { width: 20px; height: 20px; }
.ctl.on { background: #c2c2c2; }

/* picture drop-down panel */
.panel {
  position: absolute;
  top: 100%;
  left: -5px;
  display: flex;
  flex-direction: column;
  width: 449px;
  height: 754px;
  padding: 4px 8px;
  border: 1px solid #999;
  background: #fff;
  box-shadow: 0 0 9px rgba(0, 0, 0, .5);
  color: #555;
}
.panel-head {
  display: flex;
  justify-content: space-between;
  color: #111;
  font-weight: 400;
}
.panel-head a { color: #2f66e8; text-decoration: none; }
.tiles {
  display: grid;
  grid-template-columns: repeat(4, 1fr);
  gap: 5px;
  padding: 14px 6px 0 8px;
}
.tile {
  display: flex;
  flex-direction: column;
  align-items: center;
  gap: 9px;
  height: 101px;
  padding-top: 23px;
  border-radius: 3px;
  background: #f7f7f7;
}
.tile.hover { background: #e4e4e4; }
.tile svg { width: 30px; height: 30px; }
.loading {
  display: flex;
  flex: 1;
  flex-direction: column;
  align-items: center;
  justify-content: center;
  gap: 4px;
  padding-top: 34px;
}
.loading span { padding-left: 8px; }
.loader { width: 100px; height: 110px; margin-left: 8px; }

.workspace { display: flex; flex: 1; min-height: 0; }
.canvas {
  position: relative;
  display: flex;
  flex: 1;
  justify-content: center;
  overflow: hidden;
  padding: 22px 0 0 2px;
}
.page {
  display: flex;
  align-items: flex-start;
  justify-content: flex-end;
  width: 893px;
  padding: 81px 109px 0;
  background: #fff;
  box-shadow: 0 4px 10px rgba(0, 0, 0, .35);
}
.crop {
  width: 27px;
  height: 28px;
  border: solid #b5b5b5;
  border-width: 0 0 1px 1px;
}

.watermark {
  position: absolute;
  right: 22px;
  bottom: 0;
  width: 360px;
  height: 180px;
  overflow: visible;
}
.mark { fill: #f8f8f8; filter: drop-shadow(0 0 2px #aaa); }
.wm-logo { font: 700 78px "Liberation Sans", sans-serif; }
.wm-cn { font: 900 59px "Noto Sans CJK SC", sans-serif; }
.wm-url { font: 400 40px "Open Sans", sans-serif; }
.wm-du {
  fill: #f4f4f4;
  stroke: #c4c4c4;
  stroke-width: 2;
  font: 700 50px "Liberation Sans", sans-serif;
}

.scroll {
  display: flex;
  flex-direction: column;
  align-items: center;
  width: 17px;
  padding-top: 5px;
}
.split { width: 12px; height: 12px; }
.track {
  display: flex;
  flex: 1;
  flex-direction: column;
  align-items: center;
  width: 17px;
  margin-top: 5px;
  padding-top: 8px;
  background: #dddddd;
}
.tri { width: 8px; height: 6px; }
.dbl { width: 8px; height: 10px; }
.sq { width: 8px; height: 8px; }
.thumb {
  flex: 0 1 calc(55% + 3px);
  width: 17px;
  margin-top: 10px;
  border: 1px solid #999;
  border-radius: 9px;
  background: #f3f3f3;
}
.jump {
  display: flex;
  flex-direction: column;
  align-items: center;
  gap: 14px;
  margin-top: auto;
  padding-bottom: 9px;
}

.side {
  position: relative;
  display: flex;
  flex-direction: column;
  align-items: center;
  width: 46px;
  padding-right: 1px;
}
.grip {
  width: 20px;
  height: 5px;
  margin-top: 13px;
  margin-bottom: 13px;
  border: solid #bbb;
  border-width: 1px 0;
}
.side button { display: grid; place-items: center; width: 44px; height: 45px; flex: none; }
.side svg { width: 20px; height: 20px; }
.side hr { width: 39px; margin: 9px 0 7px; border: 0; border-top: 1px solid #ccc; }
.meter {
  position: absolute;
  top: 295px;
  right: 0;
  display: flex;
  align-items: flex-end;
  width: 11px;
  height: 64px;
  padding: 1px;
  border: 2px solid #777;
  border-radius: 6px;
  background: #eee;
}
.meter i { flex: 1; height: 19px; border-radius: 3px; background: #2fb765; }

.status {
  display: flex;
  flex: none;
  height: 33px;
  border-top: 1px solid #ddd;
  background: #f3f3f3;
  font-family: "Open Sans", "Noto Sans CJK SC", sans-serif;
}
.cell {
  display: flex;
  align-items: center;
  gap: 3px;
  padding: 4px 6px 0 9px;
  margin-bottom: 2px;
  border-right: 1px solid #e0e0e0;
}
.cell.pair { gap: 16px; padding-right: 7px; }
.cell.roomy { gap: 14px; padding: 4px 14px 0 12px; }
button.cell { padding: 4px 10px 0; }
.cell.strong { padding-left: 13px; border: 0; color: #222; }
.views { display: flex; align-items: center; gap: 4px; margin-left: auto; }
.views button { display: grid; place-items: center; width: 28px; height: 30px; border-radius: 4px; }
.views svg { width: 20px; height: 20px; }
.views .on { background: #c2c2c2; }
.zoom {
  display: flex;
  align-items: center;
  gap: 12px;
  margin-left: 8px;
  padding: 0 18px 0 11px;
  border-left: 1px solid #ddd;
}
.pct { display: flex; align-items: center; gap: 6px; margin-right: 3px; }
.zoom input {
  width: 174px;
  height: 18px;
  appearance: none;
  background: linear-gradient(90deg, #777 43%, #bbb 43%) center / 100% 1px no-repeat;
}
.zoom input::-webkit-slider-thumb {
  appearance: none;
  width: 16px;
  height: 16px;
  border: 1px solid #555;
  border-radius: 50%;
  background: #f3f3f3;
}

.arrows {
  position: absolute;
  z-index: 3;
  top: 0;
  left: 0;
  width: 330px;
  height: 400px;
  fill: #ff2012;
  pointer-events: none;
}
```
